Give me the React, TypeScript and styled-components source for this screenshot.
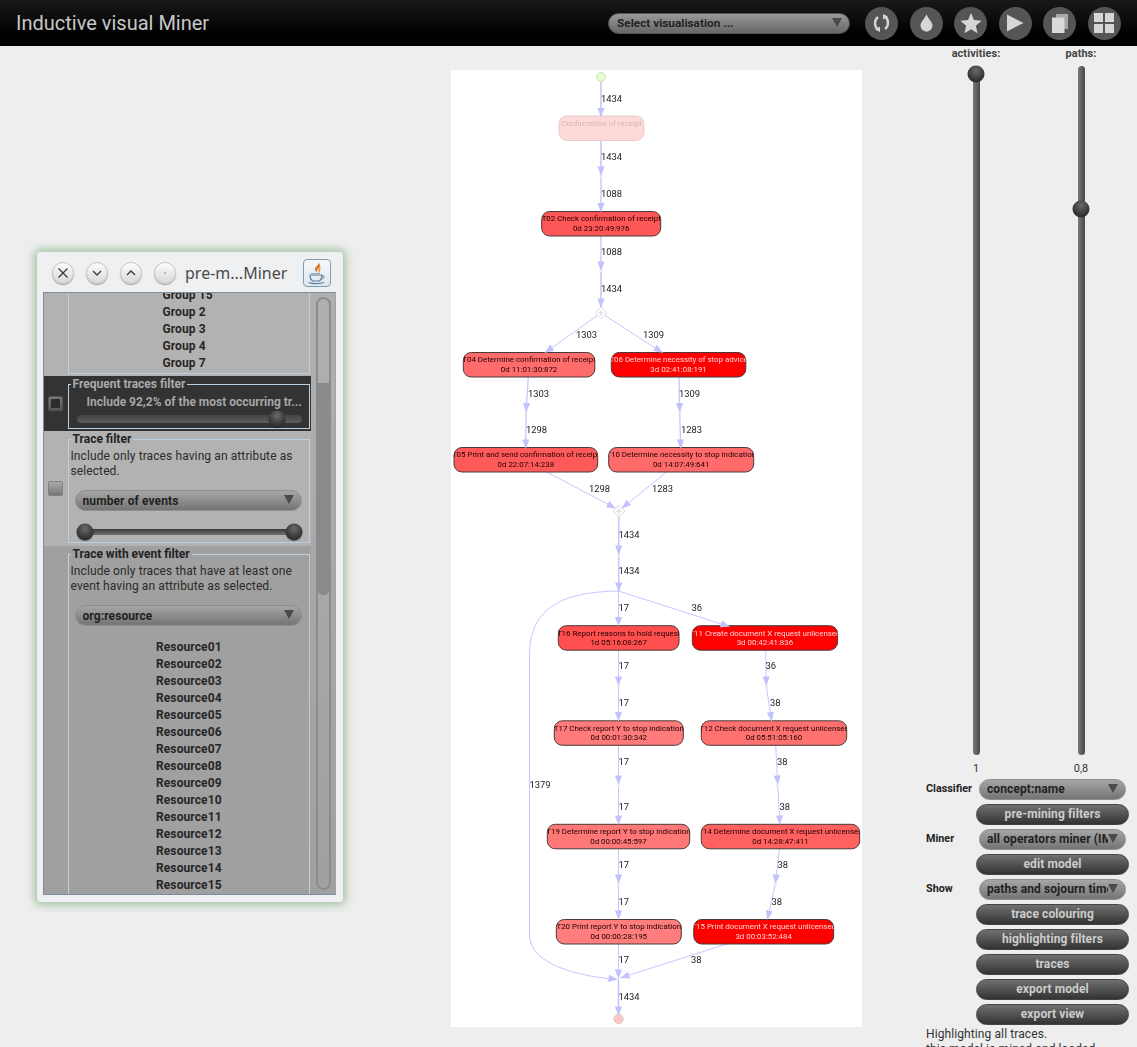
import React from 'react';
import styled, { createGlobalStyle } from 'styled-components';

const Global = createGlobalStyle`
  html, body { margin: 0; padding: 0; background: #eeeeee; overflow: hidden; height: 1047px; font-family: Roboto, "Liberation Sans", sans-serif; }
  * { box-sizing: border-box; }
`;

const Page = styled.div`
  width: 1137px; height: 1047px; overflow: hidden; background: #eee; display: flex; flex-direction: column;
`;
const Header = styled.header`
  height: 46px; flex: none; display: flex; align-items: center; padding: 0 16px;
  background: linear-gradient(#191919, #000 75%);
`;
const Title = styled.h1`
  margin: 0; flex: none; width: 193px; white-space: nowrap; font: 400 20px Roboto, sans-serif; color: #c8c8c8;
`;
const HeaderCombo = styled.div`
  margin-left: 399px; width: 242px; height: 21px; border-radius: 11px; display: flex; align-items: center; justify-content: space-between;
  padding: 0 7px 0 8px; font: 700 11.8px Roboto, sans-serif; color: #222; flex: none;
  background: linear-gradient(#9a9a9a, #666); border: 1px solid #555;
`;
const Triangle = styled.i<{ $c?: string }>`
  flex: none; width: 0; height: 0; border-left: 5px solid transparent; border-right: 5px solid transparent;
  border-top: 9px solid ${p => p.$c || '#4a4a4a'}; margin-top: -2px;
`;
const HeaderIcons = styled.div`
  margin-left: 15px; display: flex; gap: 11.6px;
`;
const RoundIcon = styled.button`
  width: 33px; height: 33px; padding: 0; border: 0; border-radius: 50%; background: #555; display: flex; align-items: center; justify-content: center;
`;
const Body = styled.main`
  flex: 1; display: flex; min-height: 0;
`;
const LeftCol = styled.div`
  flex: 0 0 451px; padding: 206px 0 0 37px;
`;
const Win = styled.section`
  width: 306px; height: 650px; background: #eff0f1; border-radius: 4px; display: flex; flex-direction: column;
  box-shadow: 0 0 8px 3px rgba(130, 175, 130, .68);
  padding: 0 6px 7px;
`;
const TitleBar = styled.div`
  height: 40px; flex: none; display: flex; align-items: center; padding: 2px 6px 0 9px; gap: 12px;
`;
const WinBtn = styled.button`
  width: 22px; height: 22px; padding: 0; border-radius: 50%; flex: none; display: flex; align-items: center; justify-content: center;
  border: 1px solid #c4c6c8; background: linear-gradient(#fdfdfd, #d6d8da); box-shadow: 0 1px 1px rgba(0,0,0,.35);
`;
const WinTitle = styled.span`
  margin-left: -3px; font: 400 16px "Noto Sans", sans-serif; color: #4a4a4a; white-space: nowrap;
`;
const JavaBtn = styled.div`
  margin-left: auto; width: 28px; height: 28px; flex: none; border: 1px solid #7f9cb4; border-radius: 4px;
  background: linear-gradient(#f6f8fa, #dfe8f0); display: flex; align-items: center; justify-content: center;
`;
const Frame = styled.div`
  width: 293px; height: 603px; flex: none; display: flex; border: 1px solid #7f8c99; border-right-color: #9aa5b0; overflow: hidden;
`;
const Content = styled.div`
  width: 267px; flex: none; display: flex; flex-direction: column;
`;
const Row = styled.div<{ $h: number; $bg: string }>`
  height: ${p => p.$h}px; flex: none; background: ${p => p.$bg}; display: flex; align-items: center; overflow: hidden;
`;
const Gutter = styled.div`
  width: 23.5px; flex: none; display: flex; justify-content: center;
`;
const Check = styled.div<{ $dark?: boolean }>`
  width: 15px; height: 15px; border-radius: 2px; display: flex; align-items: center; justify-content: center;
  border: 1px solid ${p => (p.$dark ? '#555' : '#808080')};
  background: ${p => (p.$dark ? 'linear-gradient(#777,#555)' : 'linear-gradient(#aaa,#777)')};
  &::after { content: ''; display: ${p => (p.$dark ? 'block' : 'none')}; width: 9px; height: 9px; background: #2c2c2c; border-radius: 1px; }
`;
const Box = styled.fieldset<{ $h: number; $nb?: boolean; $nt?: boolean }>`
  width: 242.5px; height: ${p => p.$h}px; margin: ${p => (p.$nt ? 0 : 1)}px 0 0; padding: 0 1px; flex: none; align-self: flex-start;
  border: 1px solid #bcd0e2; ${p => (p.$nb ? 'border-bottom: 0;' : '')} ${p => (p.$nt ? 'border-top: 0;' : '')}
  min-width: 0;
`;
const Legend = styled.legend<{ $light?: boolean }>`
  margin-left: 1px; padding: 0 2px; font: 700 12px/15px Roboto, sans-serif; color: ${p => (p.$light ? '#aaaaaa' : '#222')};
`;
const Groups = styled.div`
  margin-top: -6px; padding-left: 93px;
`;
const Resources = styled.div`
  margin-top: 13px; padding-left: 86.5px;
`;
const Item = styled.div`
  font: 700 12px/17px Roboto, sans-serif; color: #262626; letter-spacing: .1px;
`;
const Explain = styled.p`
  margin: 2px 0 0 1px; font: 400 12px/15px Roboto, sans-serif; color: #2a2a2a; letter-spacing: .1px;
`;
const Include = styled.div`
  margin-top: 3px; padding-left: 17px; font: 700 12px/15px Roboto, sans-serif; color: #a6a6a6; white-space: nowrap;
`;
const Combo = styled.div<{ $w: number; $mt?: number; $ml?: number }>`
  width: ${p => p.$w}px; height: 21px; margin: ${p => p.$mt || 0}px 0 0 ${p => p.$ml || 0}px; border-radius: 11px; flex: none;
  display: flex; align-items: center; padding: 0 7px; 
  border: 1px solid #8e8e8e; background: linear-gradient(#a6a6a6, #747474);
  font: 700 12px Roboto, sans-serif; color: #222;
`;
const ComboText = styled.span`
  flex: 1; min-width: 0; overflow: hidden; white-space: nowrap; letter-spacing: .1px;
`;
const Knob = styled.div<{ $at?: string }>`
  position: absolute; width: 17px; height: 17px; border-radius: 50%; top: 50%; left: ${p => p.$at || '0'}; transform: translate(-50%, -50%);
  background: radial-gradient(circle at 50% 30%, #6a6a6a, #3b3b3b 55%, #1e1e1e);
  box-shadow: 0 1px 1px rgba(0,0,0,.3);
`;
const HTrack = styled.div<{ $dark?: boolean; $mt: number; $w: number; $ml: number }>`
  position: relative; width: ${p => p.$w}px; height: ${p => (p.$dark ? 8 : 6)}px; margin: ${p => p.$mt}px 0 0 ${p => p.$ml}px; border-radius: 4px;
  background: ${p => (p.$dark ? 'linear-gradient(#444, #5c5c5c)' : 'linear-gradient(#3a3a3a, #707070)')};
`;
const Scroll = styled.div`
  flex: 1; padding: 4px 4px 4px 5px; background: linear-gradient(#b0b0b0, #a0a0a0);
`;
const ScrollTrack = styled.div`
  height: 100%; border: 2px solid #8c8c8c; border-radius: 8px; padding-top: 84px;
`;
const ScrollThumb = styled.div`
  height: 212px; background: #8a8a8a; border-radius: 0 0 7px 7px; margin: 0 -1px;
`;
const Canvas = styled.div`
  flex: 0 0 411px; height: 957px; margin-top: 24px; background: #fff;
`;
const Graph = styled.svg`
  display: block; filter: blur(.2px);
`;
const Edge = styled.path<{ $w?: number }>`
  fill: none; stroke: #c6c6ff; stroke-width: ${p => p.$w || 1};
`;
const Head = styled.polygon`
  fill: #c2c2ff;
`;
const Dot = styled.circle`
  fill: #fff; stroke: #ddd; stroke-width: .7;
`;
const Gate = styled.path`
  fill: #fff; stroke: #dcdcdc; stroke-width: 1;
`;
const Cross = styled.path`
  fill: none; stroke: #c8c8c8; stroke-width: .7;
`;
const EndPoint = styled.circle<{ $fill: string; $s: string }>`
  fill: ${p => p.$fill}; stroke: ${p => p.$s}; stroke-width: 1;
`;
const NodeRect = styled.rect<{ $fill: string; $s: string }>`
  fill: ${p => p.$fill}; stroke: ${p => p.$s}; stroke-width: 1;
`;
const NodeText = styled.text<{ $c: string }>`
  font: 400 7.9px Roboto, sans-serif; fill: ${p => p.$c}; text-anchor: middle;
`;
const EdgeLabel = styled.text`
  font: 400 9.4px Roboto, sans-serif; fill: #222;
`;
const RightCol = styled.aside`
  flex: 0 0 211px; margin-left: 64px; display: flex; flex-direction: column;
`;
const Sliders = styled.div`
  display: flex; gap: 5px; height: 732.5px; flex: none;
`;
const SliderCol = styled.div`
  width: 100px; display: flex; flex-direction: column; align-items: center;
`;
const SliderLabel = styled.div`
  padding-top: 1px; font: 700 10.9px/14px Roboto, sans-serif; color: #444; height: 20px; letter-spacing: .1px;
`;
const VTrack = styled.div`
  position: relative; width: 7px; height: 689px; border-radius: 4px; background: linear-gradient(90deg, #7a7a7a, #484848);
  flex: none;
`;
const VKnob = styled.div<{ $top: number }>`
  position: absolute; left: 50%; top: ${p => p.$top}px; width: 17px; height: 17px; border-radius: 50%; transform: translate(-50%, -50%);
  background: radial-gradient(circle at 50% 30%, #6a6a6a, #3b3b3b 55%, #1e1e1e);
`;
const SliderValue = styled.div`
  margin-top: 7px; font: 400 10.9px/14px Roboto, sans-serif; color: #333;
`;
const Controls = styled.div`
  display: flex; flex-direction: column; gap: 4px; flex: none;
`;
const ControlRow = styled.div`
  display: flex; align-items: center; height: 21px; flex: none;
`;
const RowLabel = styled.div`
  width: 53px; flex: none; font: 700 10.8px Roboto, sans-serif; color: #222; margin-top: -1px;
`;
const Btn = styled.button`
  width: 153px; height: 21px; flex: none; margin: 0 0 0 50px; padding: 0; border-radius: 11px; border: 1px solid #444;
  background: linear-gradient(#707070, #333); color: #ccc; font: 700 12px Roboto, sans-serif; letter-spacing: .1px;
`;
const Status = styled.div`
  flex: none; margin-top: 2px; font: 400 12px/15px Roboto, sans-serif; color: #333; white-space: nowrap; letter-spacing: .1px;
`;

type N = { x: number; y: number; w: number; a: string; b: string; f: string; s?: string; c?: string };
const H = 24.5;
const nodes: N[] = [
  { x: 559, y: 116, w: 85, a: 'Confirmation of receipt', b: '-', f: '#ffd8d8', s: '#e6cccc', c: '#d9b4b4' },
  { x: 541.7, y: 211.5, w: 119, a: 'T02 Check confirmation of receipt', b: '0d 23:20:49:976', f: '#ff5757' },
  { x: 463.3, y: 352.5, w: 131.5, a: 'T04 Determine confirmation of receipt', b: '0d 11:01:30:872', f: '#ff6c6c' },
  { x: 611.3, y: 352.5, w: 134.5, a: 'T06 Determine necessity of stop advice', b: '3d 02:41:08:191', f: '#ff0000', c: '#ffd6d6' },
  { x: 454, y: 447.5, w: 143.7, a: 'T05 Print and send confirmation of receipt', b: '0d 22:07:14:238', f: '#ff5a5a' },
  { x: 608.7, y: 447.5, w: 145, a: 'T10 Determine necessity to stop indication', b: '0d 14:07:49:641', f: '#ff6b6b' },
  { x: 558.3, y: 625.7, w: 120.7, a: 'T16 Report reasons to hold request', b: '1d 05:16:08:267', f: '#ff4f4f' },
  { x: 692.3, y: 625.7, w: 145.3, a: 'T11 Create document X request unlicensed', b: '3d 00:42:41:836', f: '#ff0000', c: '#ffd6d6' },
  { x: 554.3, y: 720.8, w: 129, a: 'T17 Check report Y to stop indication', b: '0d 00:01:30:342', f: '#ff7a7a' },
  { x: 701.3, y: 720.8, w: 145.4, a: 'T12 Check document X request unlicensed', b: '0d 05:51:05:160', f: '#ff7171' },
  { x: 547.3, y: 824.3, w: 142.4, a: 'T19 Determine report Y to stop indication', b: '0d 00:00:45:597', f: '#ff7878' },
  { x: 701.3, y: 824.3, w: 158.4, a: 'T14 Determine document X request unlicensed', b: '0d 14:28:47:411', f: '#ff6060' },
  { x: 556.3, y: 919.5, w: 125, a: 'T20 Print report Y to stop indication', b: '0d 00:00:28:195', f: '#ff7d7d' },
  { x: 693.7, y: 919.5, w: 140, a: 'T15 Print document X request unlicensed', b: '3d 00:03:52:484', f: '#ff0000', c: '#ffd6d6' },
];

const edges: number[][] = [
  [601, 82, 601, 117.5, 1.6], [601, 141, 601, 176, 1.6], [601, 176, 601, 212.5, 1.4], [601, 236, 601, 271, 1.4], [601, 271, 601, 308, 1.6],
  [601, 313, 544.5, 353, 1], [601, 313, 663, 353, 1],
  [528.3, 377, 526, 412.5, 1.3], [526, 412.5, 525.7, 449, 1.3], [679, 377, 679.7, 412.5, 1.3], [679.7, 412.5, 680.7, 449, 1.3],
  [546.7, 472, 616, 508.5, 1], [666.7, 472, 621.5, 508.5, 1],
  [618.7, 517, 618.7, 555, 1.5], [618.7, 555, 618.7, 592, 1.5],
  [618.5, 591, 618.5, 626.5, 1], [618.5, 591, 730, 626.7, 1],
  [618.5, 650, 618.5, 686, 1], [618.5, 686, 618.5, 721.5, 1],
  [765.7, 650, 766.3, 686, 1], [766.3, 686, 771.7, 721.7, 1],
  [618.5, 745, 618.5, 785, 1], [618.5, 785, 618.5, 825, 1],
  [775.7, 745, 777.7, 785, 1], [777.7, 785, 780, 825, 1],
  [618.5, 849, 618.5, 884, 1], [618.5, 884, 618.5, 920, 1],
  [779.3, 849, 775.3, 884, 1], [775.3, 884, 767.3, 920, 1],
  [618.5, 944, 618.5, 979, 1], [728.3, 943.5, 620, 978, 1],
  [618.5, 980, 618.5, 1016, 1.6],
];
const dots = [[601, 176], [601, 271], [526, 412.5], [679.7, 412.5], [618.7, 555], [618.5, 686], [766.3, 686], [618.5, 785], [777.7, 785], [618.5, 884], [775.3, 884]];
const gates = [[601, 313], [619, 511]];
const labels: [number, number, string][] = [
  [601, 99, '1434'], [601, 157, '1434'], [601, 194, '1088'], [601, 252, '1088'], [601, 289, '1434'],
  [576, 335, '1303'], [643, 335, '1309'], [528, 394, '1303'], [679, 394, '1309'], [526, 430, '1298'], [681, 430, '1283'],
  [589, 489, '1298'], [652, 489, '1283'], [618.5, 535, '1434'], [618.5, 571, '1434'],
  [618.5, 608, '17'], [691.5, 608, '36'], [618.5, 666, '17'], [765.5, 666, '36'], [618.5, 703, '17'], [770, 703, '38'],
  [618.5, 762, '17'], [777, 762, '38'], [529.5, 785, '1379'], [618.5, 807, '17'], [779.5, 807, '38'],
  [618.5, 865, '17'], [777.5, 865, '38'], [618.5, 902, '17'], [771.5, 902, '38'],
  [618.5, 960, '17'], [691, 960, '38'], [618.5, 997, '1434'],
];

function arrowHead(x1: number, y1: number, x2: number, y2: number) {
  const d = Math.hypot(x2 - x1, y2 - y1) || 1;
  const ux = (x2 - x1) / d, uy = (y2 - y1) / d;
  const bx = x2 - ux * 9.5, by = y2 - uy * 9.5;
  return `${x2},${y2} ${bx - uy * 3.6},${by + ux * 3.6} ${bx + uy * 3.6},${by - ux * 3.6}`;
}

const Diagram = () => (
  <Graph width={411} height={957} viewBox="451 70 411 957">
    <defs>
      {nodes.map((n, i) => (
        <clipPath id={`nc${i}`} key={i}><rect x={n.x} y={n.y} width={n.w} height={H} rx={8} /></clipPath>
      ))}
    </defs>
    <Edge d="M618.5 591 C575 592 529.5 600 529.5 655 L529.5 935 C529.5 960 565 974 611 979" $w={1} />
    {edges.map((e, i) => <Edge key={i} d={`M${e[0]} ${e[1]} L${e[2]} ${e[3]}`} $w={e[4]} />)}
    <EndPoint cx={601} cy={77} r={4.5} $fill="#e4ffcc" $s="#cfdcc0" />
    <EndPoint cx={618.5} cy={1019} r={4.7} $fill="#f6c8c8" $s="#e6c4c4" />
    {gates.map(([x, y], i) => (
      <g key={i}>
        <Gate d={`M${x} ${y - 6}L${x + 6} ${y}L${x} ${y + 6}L${x - 6} ${y}Z`} />
        <Cross d={`M${x - 3} ${y}H${x + 3}M${x} ${y - 3}V${y + 3}`} />
      </g>
    ))}
    {nodes.map((n, i) => (
      <g key={i}>
        <NodeRect x={n.x} y={n.y} width={n.w} height={H} rx={8} $fill={n.f} $s={n.s || '#4a3a3a'} />
        <g clipPath={`url(#nc${i})`}>
          <NodeText x={n.x + n.w / 2} y={n.y + 9.8} $c={n.c || '#220000'}>{n.a}</NodeText>
          <NodeText x={n.x + n.w / 2} y={n.y + 19.6} $c={n.c || '#220000'}>{n.b}</NodeText>
        </g>
      </g>
    ))}
    {dots.map(([x, y], i) => <Dot key={i} cx={x} cy={y} r={1.3} />)}
    {edges.map((e, i) => <Head key={i} points={arrowHead(e[0], e[1], e[2], e[3])} />)}
    <Head points={arrowHead(590, 976, 618, 979.5)} />
    {labels.map(([x, y, t], i) => <EdgeLabel key={i} x={x} y={y + 3.3}>{t}</EdgeLabel>)}
  </Graph>
);

const ic = '#d6d6d6';
const RefreshIcon = () => (
  <svg width="17" height="20" viewBox="2 1 16 20">
    <path d="M6.5 5 C2.6 8 2.6 14 6 17" fill="none" stroke={ic} strokeWidth="2.4" />
    <path d="M13.5 17 C17.4 14 17.4 8 14 5" fill="none" stroke={ic} strokeWidth="2.4" />
    <path d="M3.5 17.5 L8.5 14.5 L8.5 20 Z" fill={ic} />
    <path d="M16.5 4.5 L11.5 7.5 L11.5 2 Z" fill={ic} />
  </svg>
);
const DropIcon = () => (
  <svg width="13" height="18" viewBox="0 0 14 19"><path d="M7 0 C8.5 4.5 13.5 8 13.5 12.3 A6.5 6.5 0 0 1 .5 12.3 C.5 8 5.5 4.5 7 0Z" fill={ic} /></svg>
);
const StarIcon = () => (
  <svg width="22" height="21" viewBox="0 0 24 23"><path d="M12 0 L15.3 7.7 L23.6 8.4 L17.3 13.9 L19.2 22.1 L12 17.8 L4.8 22.1 L6.7 13.9 L.4 8.4 L8.7 7.7Z" fill={ic} /></svg>
);
const PlayIcon = () => (
  <svg width="18" height="18" viewBox="0 0 18 18"><path d="M1 0.5 V17.5 L17.5 9Z" fill={ic} /></svg>
);
const CopyIcon = () => (
  <svg width="16" height="19" viewBox="0 0 16 19">
    <rect x="4" y="0" width="12" height="15" fill="#a8a8a8" />
    <rect x="0" y="3.5" width="12.5" height="15.5" fill="#dadada" />
  </svg>
);
const GridIcon = () => (
  <svg width="20" height="20" viewBox="0 0 20 20">
    <rect x="0" y="0" width="9" height="9" fill={ic} /><rect x="11" y="0" width="9" height="9" fill={ic} />
    <rect x="0" y="11" width="9" height="9" fill={ic} /><rect x="11" y="11" width="9" height="9" fill={ic} />
  </svg>
);

const wi = '#3a3a3a';
const CloseGlyph = () => <svg width="12" height="12" viewBox="0 0 12 12"><path d="M1.5 1.5L10.5 10.5M10.5 1.5L1.5 10.5" stroke={wi} strokeWidth="1.3" /></svg>;
const DownGlyph = () => <svg width="12" height="12" viewBox="0 0 12 12"><path d="M2 4L6 8L10 4" fill="none" stroke={wi} strokeWidth="1.3" /></svg>;
const UpGlyph = () => <svg width="12" height="12" viewBox="0 0 12 12"><path d="M2 8L6 4L10 8" fill="none" stroke={wi} strokeWidth="1.3" /></svg>;
const DotGlyph = () => <svg width="12" height="12" viewBox="0 0 12 12"><circle cx="6" cy="6" r=".8" fill="#777" /></svg>;
const JavaGlyph = () => (
  <svg width="22" height="24" viewBox="0 0 22 24">
    <path d="M12 1 C14 4 8 6 9 9 C9.5 10.5 11 11.5 11 12 C10 10 12 8 13.5 6.5 C15 5 13.5 3 12 1Z" fill="#e2762a" />
    <path d="M15 5 C13 7 11.5 8.5 12.5 10.5 C13 11.5 12.5 12 12 12.5 C15 11 14.5 9 14 8 C14 7 15 6 15 5Z" fill="#e89a4a" />
    <path d="M4 14 H16 C16 17 15 19 13.5 20 H6.5 C5 19 4 17 4 14Z" fill="none" stroke="#5b7d9c" strokeWidth="1.1" />
    <path d="M16 15 C19 14.5 19 17.5 15 18" fill="none" stroke="#5b7d9c" strokeWidth="1" />
    <path d="M2.5 21.5 C6 23 14 23 18 21.5" fill="none" stroke="#5b7d9c" strokeWidth="1.1" />
    <path d="M5 12.5 H14" fill="none" stroke="#7f9cb4" strokeWidth=".8" />
  </svg>
);

const resources = Array.from({ length: 15 }, (_, i) => `Resource${String(i + 1).padStart(2, '0')}`);

const FilterWindow = () => (
  <Win>
    <TitleBar>
      <WinBtn><CloseGlyph /></WinBtn>
      <WinBtn><DownGlyph /></WinBtn>
      <WinBtn><UpGlyph /></WinBtn>
      <WinBtn><DotGlyph /></WinBtn>
      <WinTitle>pre-m...Miner</WinTitle>
      <JavaBtn><JavaGlyph /></JavaBtn>
    </TitleBar>
    <Frame>
      <Content>
        <Row $h={83} $bg="#b2b2b2">
          <Gutter />
          <Box $h={81} $nt>
            <Groups>
              {['Group 15', 'Group 2', 'Group 3', 'Group 4', 'Group 7'].map(g => <Item key={g}>{g}</Item>)}
            </Groups>
          </Box>
        </Row>
        <Row $h={55} $bg="#333333">
          <Gutter><Check $dark /></Gutter>
          <Box $h={52}>
            <Legend $light>Frequent traces filter</Legend>
            <Include>Include 92,2% of the most occurring tr...</Include>
            <HTrack $dark $mt={5} $w={225} $ml={7}><Knob $at="89%" /></HTrack>
          </Box>
        </Row>
        <Row $h={115} $bg="#b2b2b2">
          <Gutter><Check /></Gutter>
          <Box $h={111}>
            <Legend>Trace filter</Legend>
            <Explain>Include only traces having an attribute as selected.</Explain>
            <Combo $w={227} $mt={11} $ml={5}>
              <ComboText>number of events</ComboText><Triangle />
            </Combo>
            <HTrack $mt={18} $w={209} $ml={15}><Knob $at="0" /><Knob $at="100%" /></HTrack>
          </Box>
        </Row>
        <Row $h={349} $bg="#a0a0a0">
          <Gutter />
          <Box $h={348} $nb>
            <Legend>Trace with event filter</Legend>
            <Explain>Include only traces that have at least one event having an attribute as selected.</Explain>
            <Combo $w={227} $mt={11} $ml={5}>
              <ComboText>org:resource</ComboText><Triangle />
            </Combo>
            <Resources>
              {resources.map(r => <Item key={r}>{r}</Item>)}
            </Resources>
          </Box>
        </Row>
      </Content>
      <Scroll>
        <ScrollTrack><ScrollThumb /></ScrollTrack>
      </Scroll>
    </Frame>
  </Win>
);

export default function App() {
  return (
    <Page>
      <Global />
      <Header>
        <Title>Inductive visual Miner</Title>
        <HeaderCombo>Select visualisation ...<Triangle /></HeaderCombo>
        <HeaderIcons>
          <RoundIcon><RefreshIcon /></RoundIcon>
          <RoundIcon><DropIcon /></RoundIcon>
          <RoundIcon><StarIcon /></RoundIcon>
          <RoundIcon><PlayIcon /></RoundIcon>
          <RoundIcon><CopyIcon /></RoundIcon>
          <RoundIcon><GridIcon /></RoundIcon>
        </HeaderIcons>
      </Header>
      <Body>
        <LeftCol><FilterWindow /></LeftCol>
        <Canvas><Diagram /></Canvas>
        <RightCol>
          <Sliders>
            <SliderCol>
              <SliderLabel>activities:</SliderLabel>
              <VTrack><VKnob $top={8} /></VTrack>
              <SliderValue>1</SliderValue>
            </SliderCol>
            <SliderCol>
              <SliderLabel>paths:</SliderLabel>
              <VTrack><VKnob $top={143} /></VTrack>
              <SliderValue>0,8</SliderValue>
            </SliderCol>
          </Sliders>
          <Controls>
            <ControlRow><RowLabel>Classifier</RowLabel><Combo $w={147}><ComboText>concept:name</ComboText><Triangle /></Combo></ControlRow>
            <Btn>pre-mining filters</Btn>
            <ControlRow><RowLabel>Miner</RowLabel><Combo $w={147}><ComboText>all operators miner (IMf)</ComboText><Triangle /></Combo></ControlRow>
            <Btn>edit model</Btn>
            <ControlRow><RowLabel>Show</RowLabel><Combo $w={147}><ComboText>paths and sojourn times</ComboText><Triangle /></Combo></ControlRow>
            <Btn>trace colouring</Btn>
            <Btn>highlighting filters</Btn>
            <Btn>traces</Btn>
            <Btn>export model</Btn>
            <Btn>export view</Btn>
          </Controls>
          <Status>Highlighting all traces.<br />this model is mined and loaded</Status>
        </RightCol>
      </Body>
    </Page>
  );
}
